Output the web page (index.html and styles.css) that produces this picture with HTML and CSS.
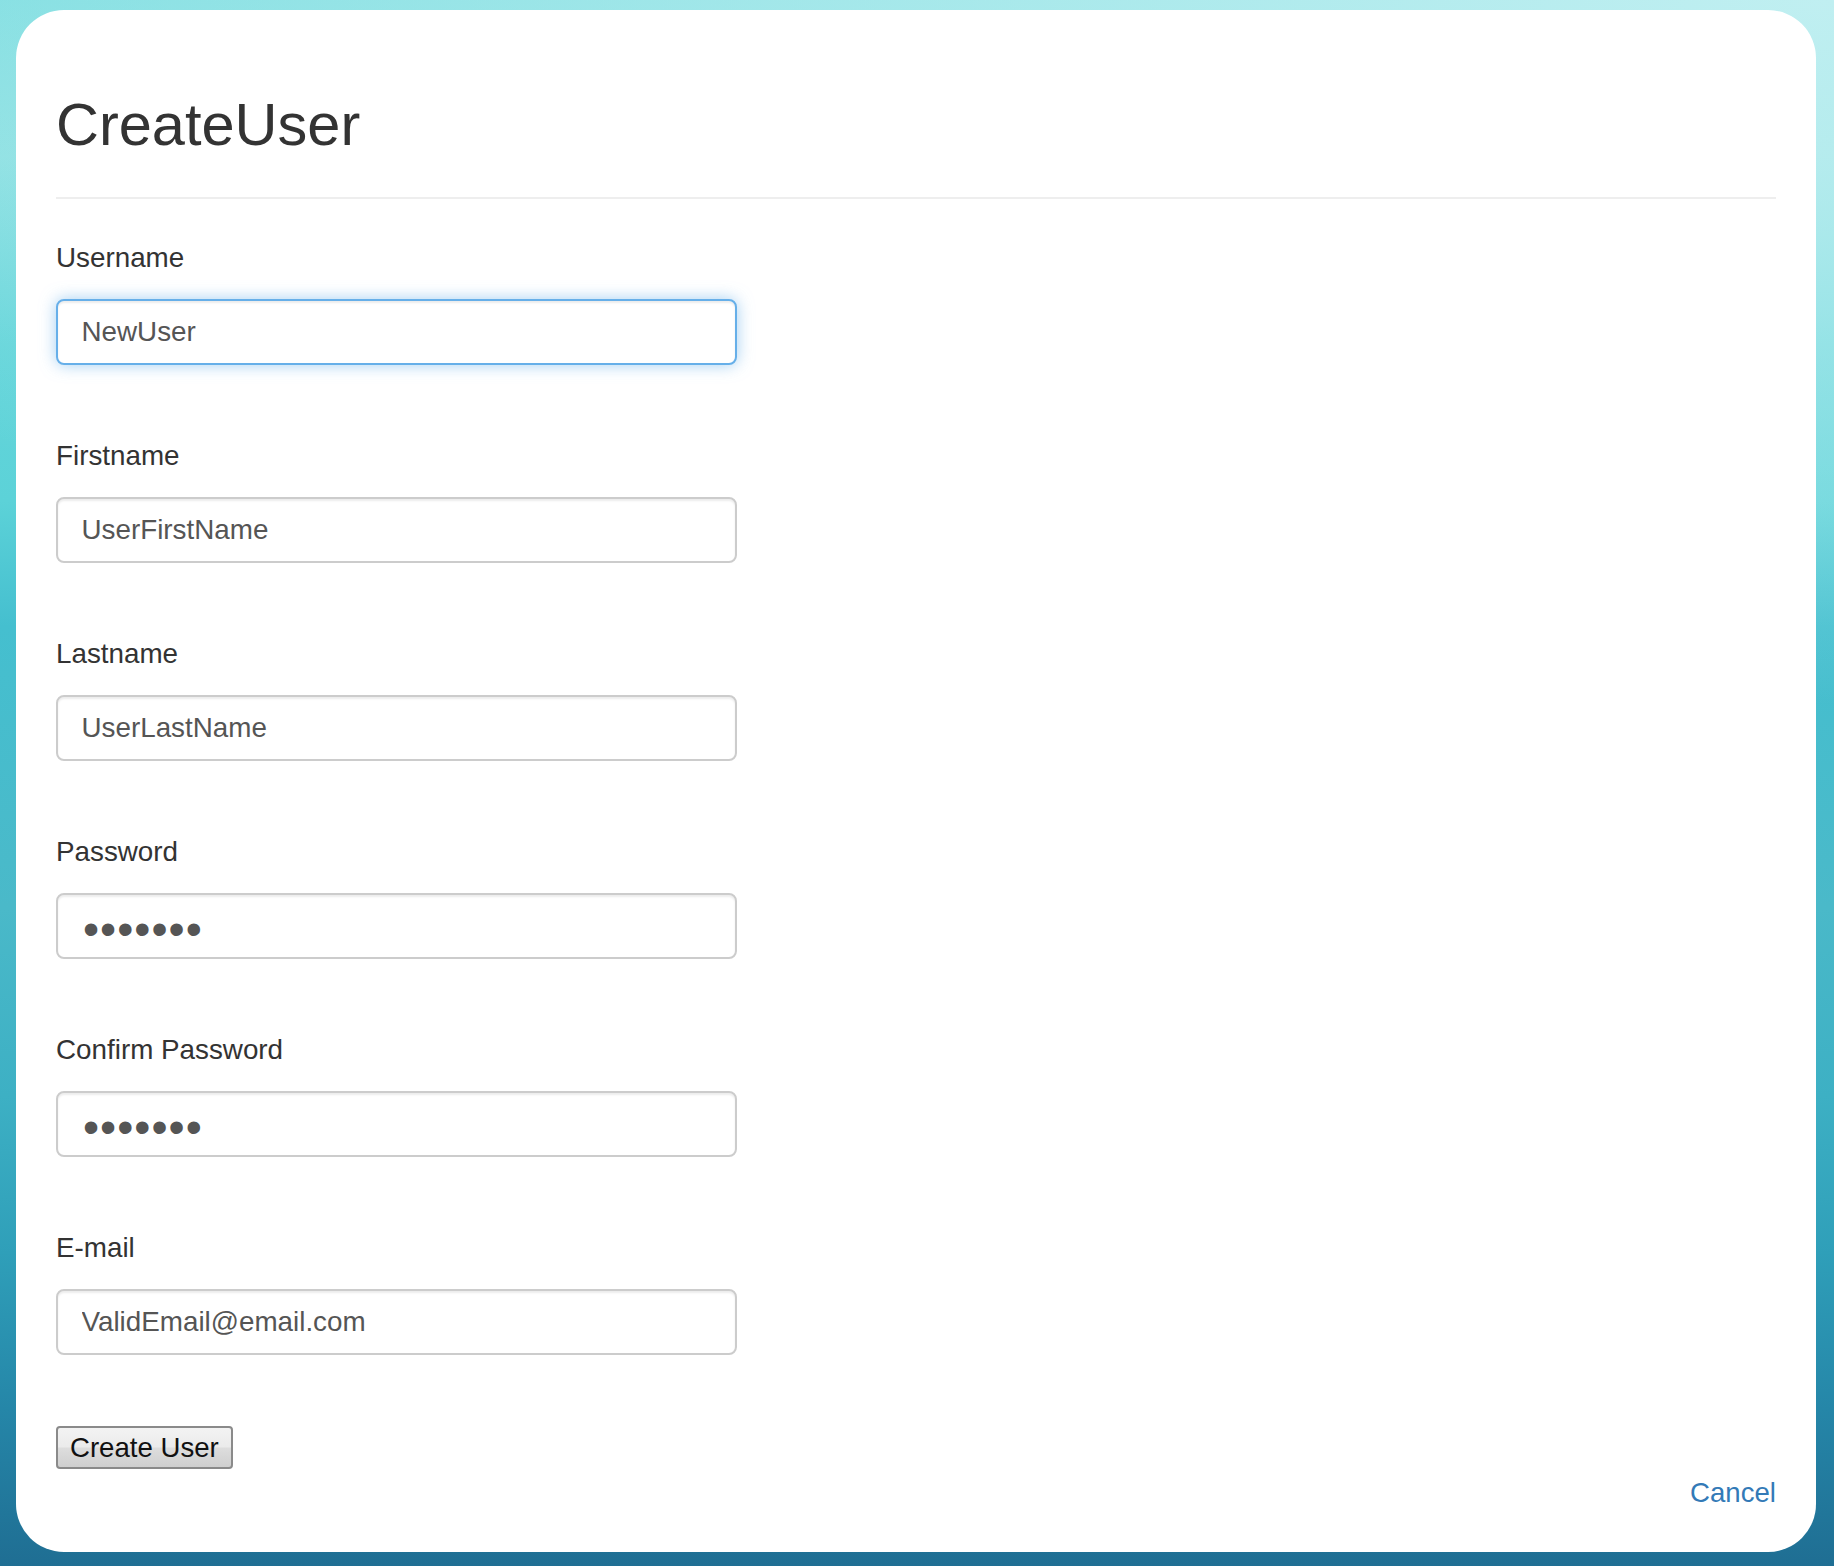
FILE: index.html
```html
<!DOCTYPE html>
<html lang="en">
<head>
<meta charset="utf-8">
<title>CreateUser</title>
<link rel="stylesheet" href="styles.css">
</head>
<body>
<main class="card">
  <h2 class="title">CreateUser</h2>
  <hr class="rule">
  <form class="form" action="#">
    <div class="group">
      <label class="label" for="username">Username</label>
      <input id="username" class="field field-focus" type="text" value="NewUser">
    </div>
    <div class="group">
      <label class="label" for="firstname">Firstname</label>
      <input id="firstname" class="field" type="text" value="UserFirstName">
    </div>
    <div class="group">
      <label class="label" for="lastname">Lastname</label>
      <input id="lastname" class="field" type="text" value="UserLastName">
    </div>
    <div class="group">
      <label class="label" for="password">Password</label>
      <input id="password" class="field field-secret" type="password" value="1234567">
    </div>
    <div class="group">
      <label class="label" for="confirm">Confirm Password</label>
      <input id="confirm" class="field field-secret" type="password" value="1234567">
    </div>
    <div class="group">
      <label class="label" for="email">E-mail</label>
      <input id="email" class="field" type="text" value="ValidEmail@email.com">
    </div>
    <div class="actions">
      <button type="submit" class="btn">Create User</button>
    </div>
    <div class="cancel-row">
      <a href="#" class="cancel">Cancel</a>
    </div>
  </form>
</main>
</body>
</html>
```
FILE: styles.css
```css
html, body {
  margin: 0;
  height: 100%;
}

body {
  box-sizing: border-box;
  min-height: 1566px;
  padding: 10px 18px 14px 16px;
  display: flex;
  font-family: "Liberation Sans", Arial, sans-serif;
  color: #333;
  background:
    radial-gradient(130% 45% at 100% 0%, rgba(196, 240, 242, 0.95) 0%, rgba(196, 240, 242, 0.55) 45%, rgba(196, 240, 242, 0) 100%),
    linear-gradient(180deg, #78dcdf 0%, #88dfe1 10%, #64d5da 22%, #5cd2d8 32%, #45bfcf 40%, #4ab9c9 58%, #3db0c4 70%, #2f9fb9 80%, #2586a8 90%, #1f6e93 100%);
}

.card {
  flex: 1;
  background: #fff;
  border-radius: 48px;
  padding: 82px 40px 0 40px;
}

.title {
  margin: 0;
  font-size: 59.5px;
  line-height: 65px;
  font-weight: 400;
  color: #333;
}

.rule {
  margin: 39.7px 0 39.3px;
  height: 0;
  border: 0;
  border-top: 2px solid #eee;
}

.form {
  margin: 0;
}

.group {
  margin-bottom: 71px;
}

.label {
  display: block;
  font-size: 27.8px;
  line-height: 40px;
  margin-bottom: 21px;
  color: #333;
}

.field {
  display: block;
  box-sizing: border-box;
  width: 681px;
  height: 66px;
  margin: 0;
  padding: 0 23.5px;
  border: 2px solid #ccc;
  border-radius: 8px;
  background: #fff;
  font-family: "Liberation Sans", Arial, sans-serif;
  font-size: 27.8px;
  color: #555;
  box-shadow: inset 0 2px 2px rgba(0, 0, 0, 0.075);
  outline: none;
}

.field-focus {
  border-color: #66afe9;
  box-shadow: inset 0 2px 2px rgba(0, 0, 0, 0.075), 0 0 16px rgba(102, 175, 233, 0.6);
}

.field-secret {
  font-size: 46px;
  letter-spacing: 1px;
  padding-top: 7px;
  padding-left: 25px;
}

.actions {
  display: flex;
}

.btn {
  box-sizing: border-box;
  height: 43px;
  padding: 0 12px;
  margin: 0;
  border: 2px solid #8a8a8a;
  border-radius: 4px;
  background: linear-gradient(180deg, #f3f3f3 0%, #ebebeb 48%, #dddddd 52%, #cfcfcf 100%);
  font-family: "Liberation Sans", Arial, sans-serif;
  font-size: 27.6px;
  line-height: 39px;
  color: #111;
}

.cancel-row {
  margin-top: 4px;
  display: flex;
  justify-content: flex-end;
  font-size: 27.6px;
  line-height: 40px;
}

.cancel {
  color: #337ab7;
  text-decoration: none;
}
```
